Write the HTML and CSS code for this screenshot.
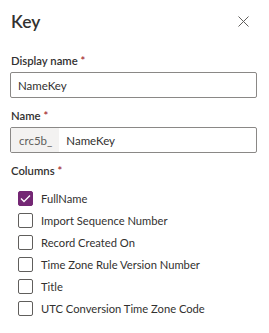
FILE: index.html
```html
<!DOCTYPE html>
<html lang="en">
<head>
    <meta charset="UTF-8">
    <meta name="viewport" content="width=device-width, initial-scale=1.0">
    <title>Key</title>
    <link rel="stylesheet" href="styles.css">
</head>
<body>
    <div class="panel">
        <div class="panel-header">
            <h2>Key</h2>
            <span class="close">
                <svg width="11" height="11" viewBox="0 0 11 11"><path d="M0.5 0.5 L10.5 10.5 M10.5 0.5 L0.5 10.5" stroke="#605e5c" stroke-width="1" fill="none"/></svg>
            </span>
        </div>

        <!-- Display name -->
        <div class="field first">
            <label>Display name <span class="req">*</span></label>
            <div class="input"><span class="value">NameKey</span></div>
        </div>

        <!-- Name -->
        <div class="field">
            <label>Name <span class="req">*</span></label>
            <div class="input">
                <span class="prefix">crc5b_</span>
                <span class="value">NameKey</span>
            </div>
        </div>

        <!-- Columns -->
        <div class="field">
            <label>Columns <span class="req">*</span></label>
            <div class="checklist">
                <div class="check-row">
                    <span class="box checked">
                        <svg width="11" height="9" viewBox="0 0 11 9"><path d="M1 4.5 L4 7.5 L10 1.5" stroke="#fff" stroke-width="1.3" fill="none"/></svg>
                    </span>
                    FullName
                </div>
                <div class="check-row"><span class="box"></span>Import Sequence Number</div>
                <div class="check-row"><span class="box"></span>Record Created On</div>
                <div class="check-row"><span class="box"></span>Time Zone Rule Version Number</div>
                <div class="check-row"><span class="box"></span>Title</div>
                <div class="check-row"><span class="box"></span>UTC Conversion Time Zone Code</div>
            </div>
        </div>
    </div>
</body>
</html>
```

FILE: styles.css
```css
body {
    margin: 0;
    background: #fff;
    font-family: Lato, "Noto Sans", sans-serif;
    color: #323130;
}
.panel {
    padding: 10px 12px 0 10px;
}
.panel-header {
    display: flex;
    justify-content: space-between;
    align-items: center;
    height: 24px;
    padding-left: 1px;
}
.panel-header h2 {
    margin: 0;
    font-size: 17.5px;
    line-height: 24px;
    font-weight: 600;
}
.close {
    display: flex;
    margin: 0 8px 2px 0;
}
.field {
    margin-top: 10px;
}
.field.first {
    margin-top: 19px;
}
.field label {
    display: block;
    font-size: 11.3px;
    line-height: 16px;
    font-weight: 600;
    padding-left: 1px;
    margin-bottom: 3px;
}
.req {
    color: #a4262c;
}
.input {
    display: flex;
    align-items: center;
    height: 26px;
    border: 1px solid #8a8886;
    border-radius: 2px;
    box-sizing: border-box;
    font-size: 11.5px;
    overflow: hidden;
}
.input .value {
    padding-left: 7px;
}
.prefix {
    display: flex;
    align-items: center;
    height: 100%;
    padding: 0 7px 0 8px;
    background: #f3f2f1;
    color: #605e5c;
}
.checklist {
    padding-left: 8px;
    padding-top: 5px;
}
.check-row {
    display: flex;
    align-items: center;
    height: 22px;
    font-size: 11.2px;
}
.box {
    display: flex;
    align-items: center;
    justify-content: center;
    width: 15px;
    height: 15px;
    box-sizing: border-box;
    border: 1px solid #605e5c;
    border-radius: 2px;
    margin-right: 8px;
}
.box.checked {
    background: #742774;
    border-color: #742774;
}
```
